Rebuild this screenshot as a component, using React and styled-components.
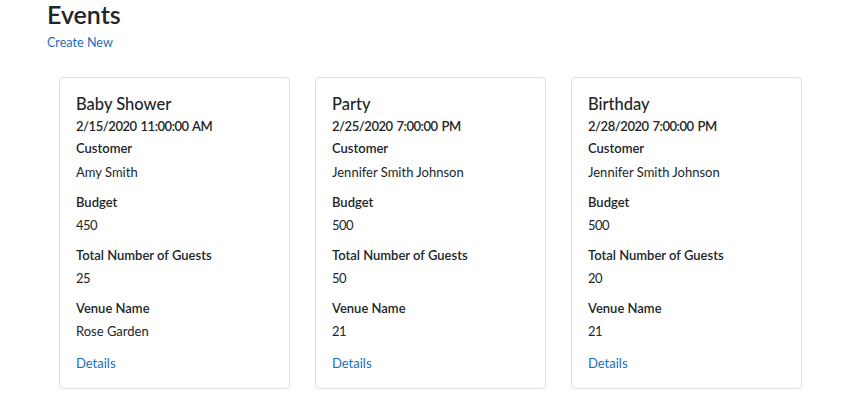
import React from "react";
import styled, { createGlobalStyle } from "styled-components";

const Global = createGlobalStyle`
  html, body { margin: 0; padding: 0; background: #fff; }
  body {
    font-family: Lato, "Open Sans", sans-serif;
    color: #212529;
    font-size: 13px;
  }
`;

const Page = styled.div`
  padding: 0 0 0 47px;
  width: 806px;
  box-sizing: border-box;
`;

const Title = styled.h1`
  margin: 0;
  font-size: 25px;
  line-height: 28px;
  font-weight: 600;
`;

const Link = styled.a`
  color: #1b6ec2;
  text-decoration: none;
  font-size: ${(p) => (p.$small ? "12.6px" : "13px")};
  line-height: 18px;
  display: inline-block;
`;

const CreateRow = styled.p`
  margin: 6px 0 0;
`;

const Deck = styled.div`
  display: flex;
  gap: 25px;
  margin: 25px 0 0 12px;
`;

const Card = styled.div`
  width: 231px;
  box-sizing: border-box;
  border: 1px solid #dfdfdf;
  border-radius: 4px;
  padding: 14px 16px 16px 16px;
`;

const CardTitle = styled.h5`
  margin: 0;
  font-size: 16.5px;
  line-height: 24px;
  font-weight: 500;
`;

const CardDate = styled.div`
  font-size: 13px;
  line-height: 20px;
  font-weight: 600;
  letter-spacing: -0.45px;
  word-spacing: 1px;
`;

const Label = styled.dt`
  font-size: 13px;
  line-height: 20px;
  font-weight: 600;
  margin-top: ${(p) => (p.$first ? "2px" : "10px")};
`;

const Value = styled.dd`
  margin: ${(p) => (p.$first ? "4px" : "3px")} 0 0;
  font-size: 13px;
  line-height: 20px;
  letter-spacing: ${(p) => (p.$numeric ? "-0.5px" : "0")};
`;

const List = styled.dl`
  margin: 0;
`;

const Footer = styled.div`
  margin-top: 13px;
`;

const events = [
  {
    name: "Baby Shower",
    date: "2/15/2020 11:00:00 AM",
    customer: "Amy Smith",
    budget: "450",
    guests: "25",
    venue: "Rose Garden",
  },
  {
    name: "Party",
    date: "2/25/2020 7:00:00 PM",
    customer: "Jennifer Smith Johnson",
    budget: "500",
    guests: "50",
    venue: "21",
  },
  {
    name: "Birthday",
    date: "2/28/2020 7:00:00 PM",
    customer: "Jennifer Smith Johnson",
    budget: "500",
    guests: "20",
    venue: "21",
  },
];

const isNum = (v) => /^\d+$/.test(v);

export default function App() {
  return (
    <>
      <Global />
      <Page>
        <Title>Events</Title>
        <CreateRow>
          <Link href="#" $small>Create New</Link>
        </CreateRow>
        <Deck>
          {events.map((e) => (
            <Card key={e.name}>
              <CardTitle>{e.name}</CardTitle>
              <CardDate>{e.date}</CardDate>
              <List>
                <Label $first>Customer</Label>
                <Value $first>{e.customer}</Value>
                <Label>Budget</Label>
                <Value $numeric>{e.budget}</Value>
                <Label>Total Number of Guests</Label>
                <Value $numeric>{e.guests}</Value>
                <Label>Venue Name</Label>
                <Value $numeric={isNum(e.venue)}>{e.venue}</Value>
              </List>
              <Footer>
                <Link href="#">Details</Link>
              </Footer>
            </Card>
          ))}
        </Deck>
      </Page>
    </>
  );
}
